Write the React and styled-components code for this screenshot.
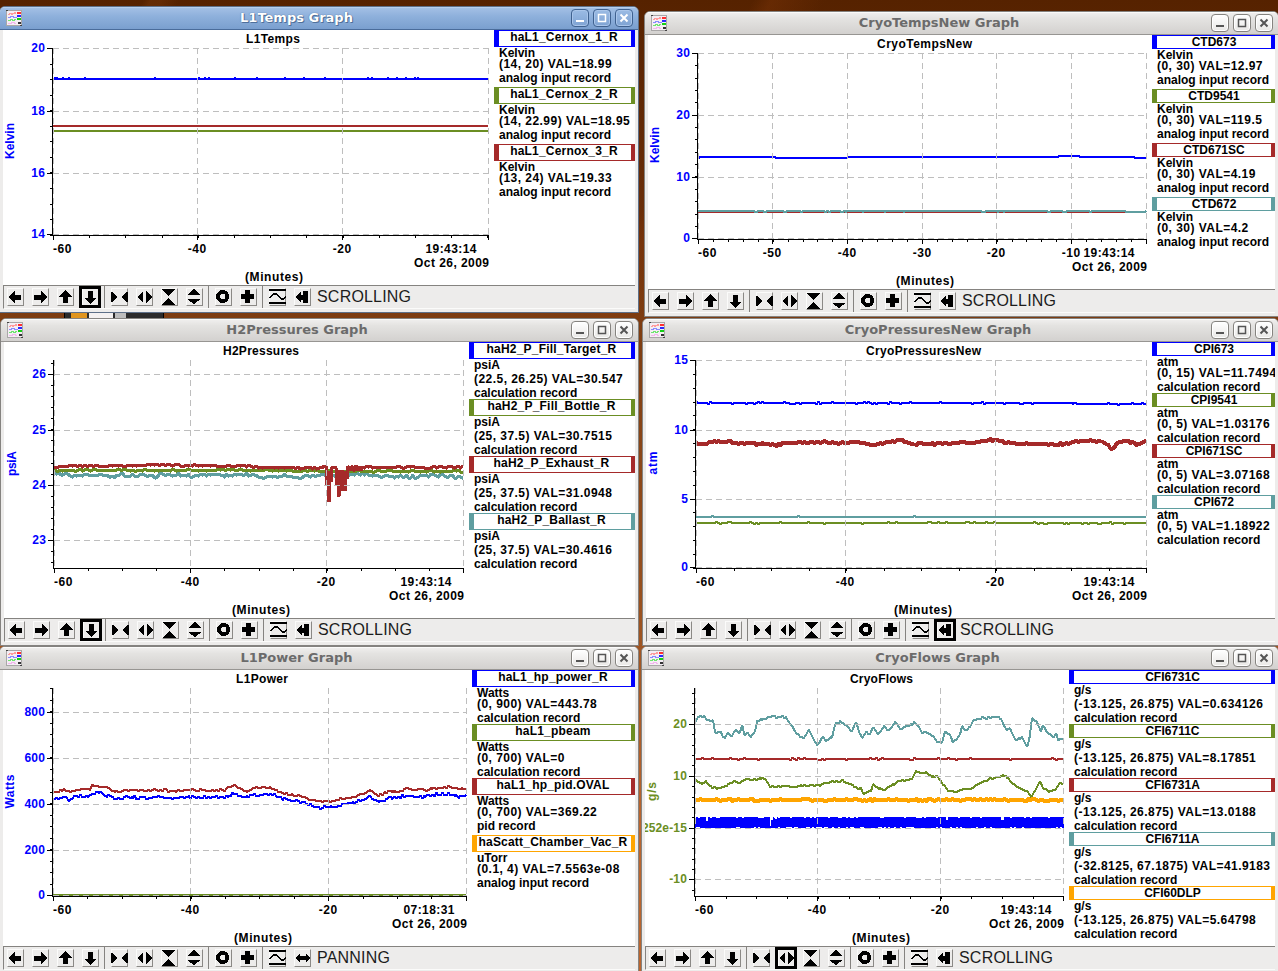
import React from "react";
import styled, { createGlobalStyle, css } from "styled-components";

const BLUE = "#0000ff";
const OLIVE = "#6b8e23";
const BROWN = "#a52a2a";
const CADET = "#5f9ea0";
const ORANGE = "#ffa500";

const GlobalStyle = createGlobalStyle`
  body {
    margin: 0;
    overflow: hidden;
    font-family: "Liberation Sans", Arial, sans-serif;
  }
`;

const Desktop = styled.div`
  position: relative;
  width: 1278px;
  height: 971px;
  overflow: hidden;
  background: linear-gradient(
      118deg,
      transparent 0 8%,
      rgba(140, 70, 20, 0.25) 8.4% 9%,
      transparent 10% 42%,
      rgba(140, 60, 10, 0.3) 43%,
      transparent 46%
    ),
    linear-gradient(#562200, #6d300a 25%, #7d3d12 33%, #96501f 60%, #b9652f 85%);
`;

const Frame = styled.section`
  position: absolute;
  left: ${({ x }) => x}px;
  top: ${({ y }) => y}px;
  width: ${({ w }) => w}px;
  height: ${({ h }) => h}px;
  box-sizing: border-box;
  display: flex;
  flex-direction: column;
  border: 1px solid ${({ active }) => (active ? "#5d6f88" : "#858380")};
  border-radius: 6px 6px 0 0;
  background: #edeceb;
  overflow: hidden;
`;

const TitleBar = styled.header`
  height: 22px;
  flex: none;
  display: flex;
  align-items: center;
  padding: 0 5px 0 6px;
  border-bottom: 1px solid #979592;
  background: linear-gradient(#f1f0ef, #e4e3e1 30%, #d3d1cf);
  box-shadow: inset 0 1px 0 #fbfbfa;
  color: #6b6b6b;
  ${({ active }) =>
    active &&
    css`
      background: linear-gradient(#a5c1e6, #8fb1dc 40%, #7a9fcf);
      border-color: #4a6c9b;
      box-shadow: inset 0 1px 0 #b7cfee;
      color: white;
      text-shadow: 0 0 1px #2c4a78, 1px 1px 0 #53749f;
    `}
`;

const Caption = styled.h1`
  flex: 1;
  margin: 0;
  text-align: center;
  font: bold 13px/20px "DejaVu Sans", sans-serif;
  white-space: nowrap;
`;

const Controls = styled.div`
  display: flex;
  gap: 4px;
`;

const Control = styled.button`
  width: 18px;
  height: 18px;
  padding: 0;
  display: flex;
  border: 1px solid ${({ active }) => (active ? "#3f618f" : "#85837f")};
  border-radius: 4px;
  background: ${({ active }) =>
    active
      ? "linear-gradient(#9bbbe4, #7fa3d3)"
      : "linear-gradient(#ffffff, #e9e8e6)"};
  box-shadow: inset 0 0 0 1px ${({ active }) => (active ? "#a9c5ea" : "#fff")};
  color: ${({ active }) => (active ? "#fff" : "#555")};
`;

const Body = styled.div`
  flex: 1;
  min-height: 0;
  display: flex;
  margin: 0 3px;
  background: white;
`;

const Legend = styled.div`
  flex: 1;
  min-width: 0;
  overflow: hidden;
  font-size: 12px;
  font-weight: bold;
  line-height: 12px;
  white-space: nowrap;
`;

const LegendItem = styled.div`
  margin-bottom: 1px;
`;

const Signal = styled.div`
  box-sizing: border-box;
  height: 14px;
  border: solid ${({ color }) => color};
  border-width: 1px 4px 1px 5px;
  text-align: center;
  ${({ tall }) =>
    tall &&
    css`
      height: 17px;
      padding-right: 2px;
      letter-spacing: 0.2px;
    `}
`;

// Lines are only as tall as their glyphs: descenders need three more pixels.
const Line = styled.div`
  height: ${({ tall }) => (tall ? 14 : 11)}px;
  padding-left: 5px;
  letter-spacing: ${({ wide }) => (wide ? 0.46 : 0)}px;
`;

const Toolbar = styled.footer`
  box-sizing: border-box;
  flex: none;
  height: 24px;
  margin: 0 3px 3px;
  display: flex;
  border-top: 1px solid #858380;
  border-left: 1px solid #858380;
  border-bottom: 1px solid #fbfbfa;
`;

const Group = styled.div`
  display: flex;
  gap: 8px;
  padding: 2px 5px 0 6px;
  border-left: 1px solid #858380;

  &:first-child {
    padding-left: 3px;
    border-left: none;
  }
`;

const Tool = styled.button`
  position: relative;
  box-sizing: border-box;
  width: 17px;
  height: 18px;
  padding: 0;
  border: 1px solid;
  border-color: #fbfbfa #8b8986 #8b8986 #fbfbfa;
  background: #edeceb;

  svg {
    position: absolute;
    left: -1px;
    top: -1px;
  }

  ${({ selected }) =>
    selected &&
    css`
      &::after {
        content: "";
        position: absolute;
        inset: -3px -3px -3px -4px;
        border: 3px solid black;
      }
    `}
`;

const Status = styled.div`
  padding-left: 1px;
  font-size: 16px;
  line-height: 21px;
  letter-spacing: 0.2px;
  color: #1c1c1c;
`;

const Taskbar = styled.div`
  position: absolute;
  left: 64px;
  top: 312px;
  width: 100px;
  height: 8px;
  display: flex;
  background: #2b2b2b;
  border: solid black;
  border-width: 0 1px;
  box-sizing: border-box;
  padding-left: 6px;
`;

const Chip = styled.div`
  width: ${({ w }) => w}px;
  background: ${({ color }) => color};
  margin-right: 2px;
`;

const ICONS = {
  left: <path d="M1 9 7.500 2.500V6.500H14v5H7.500V15.500z" />,
  right: <path d="M15 9 8.500 2.500V6.500H2v5h6.500V15.500z" />,
  up: <path d="M8.500 2 15 8.500h-4V15H6V8.500H2z" />,
  down: <path d="M8.500 16 15 9.500h-4V3H6v6.500H2z" />,
  squeezeX: <path d="M0 4h1l6 5-6 5H0zM17 4h-1l-6 5 6 5h1z" />,
  stretchX: <path d="M7 3v12L1 9zM10 3v12l6-6z" />,
  squeezeY: <path d="M1 1h13v1L7.500 8 1 2zM1 17h13v-1l-6.500-6L1 16z" />,
  stretchY: <path d="M1 7h14L8 1zM1 10.500h14L8 16.500z" />,
  ring: <circle cx="7.700" cy="8.500" r="4.600" fill="none" stroke="#000" strokeWidth="4" />,
  plus: <path d="M5 2h5v4h4v5h-4v4H5v-4H1V6h4z" />,
  wave: (
    <>
      <path d="M0 1h17v2H0zM0 14h17v2H0z" />
      <path d="M0.500 10.500 4.500 6h3l5 5h2l2.500-3" fill="none" stroke="#000" strokeWidth="1.500" />
    </>
  ),
  toBar: <path d="M1 9 7 3v3.500h2V3h5v12H9v-3.500H7V15z" />,
  pan: <path d="M1 9 5.500 4.500V7h6V4.500L16 9l-4.500 4.500V11h-6v2.500z" />,
};

const GROUPS = [
  ["left", "right", "up", "down"],
  ["squeezeX", "stretchX", "squeezeY", "stretchY"],
  ["ring", "plus"],
];

const AppIcon = () => (
  <svg width="16" height="16" viewBox="0 0 16 16" shapeRendering="crispEdges">
    <rect width="16" height="16" fill="#a9a7a7" />
    <rect x="1" y="1" width="14" height="14" fill="#f4eef4" />
    <g fill="none">
      <path d="M2 4.500h1v-1h2v1h1v-1h2v-1h1v1h1" stroke="#ff9c9c" />
      <path d="M2 7.500h2v-1h3v1h3v-1" stroke="#8a8aff" />
      <path d="M2 10.500h2v-1h2v1h2v-1h2" stroke="#6fe56f" />
      <path d="M2 13.500h3v-1h3v1h2" stroke="#f2b6ee" />
    </g>
    <path d="M11 2h4v2h-4z" fill="#ff3030" />
    <path d="M11 5h4v2h-4z" fill="#2a2aff" />
    <path d="M11 8h4v2h-4z" fill="#14d014" />
    <path d="M12 12h3v2h-3z" fill="#333" />
    <path d="M0 0h2v1H0zM14 15h2v1h-2z" fill="#444" />
  </svg>
);

const ControlIcon = ({ children }) => (
  <svg width="16" height="16" viewBox="0 0 16 16" fill="none" stroke="currentColor" strokeWidth="2">
    {children}
  </svg>
);

// Repeatable noise, so that a trace looks the same on every render.
const noise = (x, seed) => {
  const v = Math.sin(x * 12.9898 + seed * 78.233) * 43758.5453;
  return v - Math.floor(v);
};

const buildTrace = ({ points, jitter = 0, seed = 1, blips, blipBy = -1 }) => {
  const out = [];
  let k = 0;
  for (let x = points[0][0]; x <= points[points.length - 1][0]; x++) {
    while (k < points.length - 2 && x > points[k + 1][0]) k++;
    const [x0, y0] = points[k];
    const [x1, y1] = points[k + 1];
    const base = y0 + ((y1 - y0) * (x - x0)) / (x1 - x0);
    let y = Math.round(base + (noise(x >> 1, seed) - 0.5) * 2 * jitter);
    if (blips && blips.some(([a, b]) => x >= a && x <= b)) y += blipBy;
    out.push(`${x},${y}`);
  }
  return out.join(" ");
};

// A signal that swings between two levels faster than one pixel column.
const buildBand = ({ from, to, top, bottom, seed, notches }) => {
  let d = "";
  for (let x = from; x <= to; x++) {
    let y0 = top + (noise(x >> 1, seed) > 0.75 ? 1 : 0);
    const y1 = bottom - (noise(x >> 1, seed + 1) > 0.75 ? 1 : 0);
    notches.forEach(([a, b, depth]) => {
      if (x >= a && x <= b) y0 = top + depth;
    });
    d += `M${x + 0.5} ${y0}V${y1}`;
  }
  return d;
};

const range = (from, to, step) => {
  const out = [];
  for (let v = from; v <= to + 0.01; v += step) out.push(v);
  return out;
};

const Plot = ({ origin, size, plot }) => {
  const { title, unit, color, axis, xTicks, yTicks, xMinor, yMinor, time } = plot;
  const { left, right, top, bottom } = axis;
  return (
    <svg
      width={size[0]}
      height={size[1]}
      viewBox={`${origin[0]} ${origin[1]} ${size[0]} ${size[1]}`}
      fontSize="12"
      fontWeight="bold"
    >
      <g shapeRendering="crispEdges" fill="none" strokeLinejoin="bevel">
        {plot.band && <path d={buildBand(plot.band)} stroke={plot.band.color} />}
        {plot.traces.map((t, i) => (
          <polyline
            key={i}
            points={buildTrace(t)}
            stroke={t.color}
            strokeWidth={t.width || 2}
          />
        ))}
        <g stroke="#bebebe" strokeDasharray="6 4">
          {xTicks.map(([x]) => (
            <path key={x} d={`M${x + 0.5} ${top}V${bottom}`} />
          ))}
          {yTicks.map(([y]) => (
            <path key={y} d={`M${left + 1} ${y + 0.5}H${right + 1}`} />
          ))}
        </g>
        <g stroke="#000">
          <path d={`M${left + 0.5} ${top}V${bottom + 0.5}H${right + 1}`} />
          {xTicks.map(([x]) => (
            <path key={x} d={`M${x + 0.5} ${bottom}v5`} />
          ))}
          {yTicks.map(([y]) => (
            <path key={y} d={`M${left - 5} ${y + 0.5}h5`} />
          ))}
          {range(xTicks[0][0], right, xMinor).map(x => (
            <path key={x} d={`M${Math.round(x) + 0.5} ${bottom}v3`} />
          ))}
          {range(yMinor[0], bottom, yMinor[1]).map(y => (
            <path key={y} d={`M${left - 2} ${Math.round(y) + 0.5}h2`} />
          ))}
        </g>
      </g>
      <text x={title[1]} y={origin[1] + 13} textLength={title[2]}>
        {title[0]}
      </text>
      {yTicks.map(([y, label]) => (
        <text key={y} x={left - 7} y={y + 4} fill={color} textAnchor="end" letterSpacing="0.15">
          {label}
        </text>
      ))}
      {xTicks.map(([x, label], i) =>
        label ? (
          <text
            key={x}
            x={x}
            y={bottom + 18}
            textAnchor={i === 0 ? "start" : "middle"}
            textLength="18.500"
          >
            {label}
          </text>
        ) : null
      )}
      <text x={right - 62.5} y={bottom + 18} textLength="51">
        {time}
      </text>
      <text x={right - 74} y={bottom + 32} textLength="75">
        Oct 26, 2009
      </text>
      <text x={plot.minutesX} y={bottom + 46} textLength="58">
        (Minutes)
      </text>
      <text
        transform={`translate(${unit[1]} ${unit[2]}) rotate(-90)`}
        textLength={unit[3]}
        fill={color}
      >
        {unit[0]}
      </text>
    </svg>
  );
};

const hasDescender = text => /[gjpqy_,()]/.test(text);

const GraphWindow = ({ name, x, y, right, bottom, active, legendX, legend, selected, panning, plot }) => {
  const groups = [...GROUPS, ["wave", panning ? "pan" : "toBar"]];
  return (
    <Frame x={x} y={y} w={right - x} h={bottom - y} active={active}>
      <TitleBar active={active}>
        <AppIcon />
        <Caption>{name} Graph</Caption>
        <Controls>
          <Control active={active} aria-label="Minimize">
            <ControlIcon>
              <path d="M4 11h8" />
            </ControlIcon>
          </Control>
          <Control active={active} aria-label="Maximize">
            <ControlIcon>
              <path d="M4.500 4.500h7v7h-7z" strokeWidth="1.500" />
            </ControlIcon>
          </Control>
          <Control active={active} aria-label="Close">
            <ControlIcon>
              <path d="M4.500 4.500l7 7M11.500 4.500l-7 7" />
            </ControlIcon>
          </Control>
        </Controls>
      </TitleBar>
      <Body>
        <Plot
          origin={[x + 4, y + 24]}
          size={[legendX - x - 4, bottom - 28 - y - 24]}
          plot={plot}
        />
        <Legend>
          {legend.map(([color, signal, ...lines]) => (
            <LegendItem key={signal}>
              <Signal color={color} tall={hasDescender(signal)}>
                {signal}
              </Signal>
              {lines.map(line => (
                <Line key={line} tall={hasDescender(line)} wide={line[0] === "("}>
                  {line}
                </Line>
              ))}
            </LegendItem>
          ))}
        </Legend>
      </Body>
      <Toolbar>
        {groups.map((group, i) => (
          <Group key={i}>
            {group.map(icon => (
              <Tool key={icon} selected={icon === selected} aria-label={icon}>
                <svg width="17" height="18" viewBox="0 0 17 18" shapeRendering="crispEdges">
                  {ICONS[icon]}
                </svg>
              </Tool>
            ))}
          </Group>
        ))}
        <Status>{panning ? "PANNING" : "SCROLLING"}</Status>
      </Toolbar>
    </Frame>
  );
};

const flat = (from, to, y) => [[from, y], [to, y]];
const at = (...xs) => xs.map(v => [v, v]);

const AI = "analog input record";
const CALC = "calculation record";

const WINDOWS = [
  {
    name: "L1Temps",
    x: -1,
    y: 6,
    right: 639,
    bottom: 313,
    active: true,
    legendX: 494,
    selected: "down",
    legend: [
      [BLUE, "haL1_Cernox_1_R", "Kelvin", "(14, 20) VAL=18.99", AI],
      [OLIVE, "haL1_Cernox_2_R", "Kelvin", "(14, 22.99) VAL=18.95", AI],
      [BROWN, "haL1_Cernox_3_R", "Kelvin", "(13, 24) VAL=19.33", AI],
    ],
    plot: {
      title: ["L1Temps", 246, 54],
      unit: ["Kelvin", 14, 159, 36],
      color: BLUE,
      axis: { left: 52, right: 488, top: 48, bottom: 235 },
      xTicks: [[53, "-60"], [197, "-40"], [342, "-20"], [488]],
      xMinor: 36.2,
      yTicks: [[48, "20"], [111, "18"], [173, "16"], [234, "14"]],
      yMinor: [48, 15.55],
      time: "19:43:14",
      minutesX: 245,
      traces: [
        {
          color: BLUE,
          points: flat(53, 488, 79),
          blips: at(55, 57, 63, 69, 85, 155, 199, 205, 209, 235, 257, 285, 304, 325, 368, 372, 388, 397, 406, 415, 418),
        },
        { color: OLIVE, points: flat(53, 488, 131) },
        { color: BROWN, points: flat(53, 488, 126) },
      ],
    },
  },
  {
    name: "CryoTempsNew",
    x: 644,
    y: 11,
    right: 1279,
    bottom: 317,
    legendX: 1152,
    legend: [
      [BLUE, "CTD673", "Kelvin", "(0, 30) VAL=12.97", AI],
      [OLIVE, "CTD9541", "Kelvin", "(0, 30) VAL=119.5", AI],
      [BROWN, "CTD671SC", "Kelvin", "(0, 30) VAL=4.19", AI],
      [CADET, "CTD672", "Kelvin", "(0, 30) VAL=4.2", AI],
    ],
    plot: {
      title: ["CryoTempsNew", 877, 95],
      unit: ["Kelvin", 659, 163, 36],
      color: BLUE,
      axis: { left: 697, right: 1146, top: 53, bottom: 239 },
      xTicks: [[698, "-60"], [772, "-50"], [847, "-40"], [922, "-30"], [996, "-20"], [1071, "-10"], [1146]],
      xMinor: 14.93,
      yTicks: [[53, "30"], [115, "20"], [177, "10"], [238, "0"]],
      yMinor: [53, 12.35],
      time: "19:43:14",
      minutesX: 896,
      traces: [
        {
          color: BLUE,
          points: [[698, 158], [700, 157], [772, 157], [779, 158], [845, 158], [850, 157], [1057, 157], [1060, 156], [1078, 156], [1081, 157], [1134, 157], [1136, 158], [1146, 158]],
        },
        { color: BROWN, points: flat(698, 1146, 212) },
        {
          color: CADET,
          points: flat(698, 1146, 211),
          blips: [[755, 757], [764, 766], [784, 786], [801, 802], [825, 826], [829, 830], [841, 843], [846, 846], [863, 863], [885, 885], [904, 904], [982, 985], [998, 998], [1004, 1004], [1048, 1050], [1063, 1066], [1090, 1091], [1126, 1145]],
          blipBy: 1,
        },
      ],
    },
  },
  {
    name: "H2Pressures",
    x: 0,
    y: 318,
    right: 639,
    bottom: 646,
    legendX: 469,
    selected: "down",
    legend: [
      [BLUE, "haH2_P_Fill_Target_R", "psiA", "(22.5, 26.25) VAL=30.547", CALC],
      [OLIVE, "haH2_P_Fill_Bottle_R", "psiA", "(25, 37.5) VAL=30.7515", CALC],
      [BROWN, "haH2_P_Exhaust_R", "psiA", "(25, 37.5) VAL=31.0948", CALC],
      [CADET, "haH2_P_Ballast_R", "psiA", "(25, 37.5) VAL=30.4616", CALC],
    ],
    plot: {
      title: ["H2Pressures", 223, 76],
      unit: ["psiA", 15.5, 476, 25],
      color: BLUE,
      axis: { left: 53, right: 463, top: 360, bottom: 568 },
      xTicks: [[54, "-60"], [190, "-40"], [326, "-20"], [463]],
      xMinor: 34.1,
      yTicks: [[374, "26"], [430, "25"], [485, "24"], [540, "23"]],
      yMinor: [363, 11.06],
      time: "19:43:14",
      minutesX: 232,
      traces: [
        {
          color: CADET,
          width: 3,
          jitter: 1.5,
          seed: 3,
          points: [[54, 473], [63, 474], [75, 476], [95, 475], [108, 475], [114, 478], [118, 474], [135, 475], [152, 475], [156, 478], [160, 474], [185, 475], [195, 476], [215, 474], [225, 476], [235, 475], [255, 474], [260, 477], [285, 475], [300, 477], [320, 475], [345, 476], [352, 474], [385, 476], [412, 477], [440, 475], [463, 477]],
        },
        { color: OLIVE, width: 3, jitter: 0.7, seed: 5, points: [[54, 470], [260, 470], [340, 471], [463, 471]] },
        {
          color: BROWN,
          width: 3,
          jitter: 0.9,
          seed: 8,
          points: [[54, 466], [170, 465], [250, 466], [262, 467], [320, 468], [326, 466], [327, 486], [328, 470], [329, 501], [330, 471], [331, 482], [332, 466], [336, 467], [337, 484], [338, 470], [339, 497], [340, 472], [341, 490], [342, 470], [343, 484], [344, 470], [345, 490], [346, 470], [347, 478], [348, 467], [350, 471], [352, 466], [354, 471], [356, 466], [358, 471], [360, 466], [361, 470], [362, 467], [463, 467]],
        },
      ],
    },
  },
  {
    name: "CryoPressuresNew",
    x: 642,
    y: 318,
    right: 1279,
    bottom: 646,
    legendX: 1152,
    selected: "toBar",
    legend: [
      [BLUE, "CPI673", "atm", "(0, 15) VAL=11.7494", CALC],
      [OLIVE, "CPI9541", "atm", "(0, 5) VAL=1.03176", CALC],
      [BROWN, "CPI671SC", "atm", "(0, 5) VAL=3.07168", CALC],
      [CADET, "CPI672", "atm", "(0, 5) VAL=1.18922", CALC],
    ],
    plot: {
      title: ["CryoPressuresNew", 866, 115],
      unit: ["atm", 657, 474.5, 23],
      color: BLUE,
      axis: { left: 695, right: 1146, top: 360, bottom: 568 },
      xTicks: [[696, "-60"], [845, "-40"], [995, "-20"], [1146]],
      xMinor: 37.5,
      yTicks: [[360, "15"], [430, "10"], [499, "5"], [567, "0"]],
      yMinor: [360, 13.85],
      time: "19:43:14",
      minutesX: 894,
      traces: [
        { color: BLUE, jitter: 0.6, seed: 2, points: [[696, 403], [785, 403], [792, 404], [805, 403], [1060, 403], [1090, 404], [1146, 404]] },
        { color: CADET, jitter: 0.52, seed: 4, points: flat(696, 1146, 517) },
        { color: OLIVE, jitter: 0.6, seed: 7, points: flat(696, 1146, 523) },
        {
          color: BROWN,
          width: 4,
          jitter: 1,
          seed: 6,
          points: [[696, 444], [706, 444], [715, 441], [722, 441], [735, 443], [750, 443], [760, 444], [775, 445], [790, 443], [812, 442], [840, 443], [858, 442], [872, 445], [885, 443], [895, 441], [901, 440], [908, 442], [914, 445], [920, 443], [932, 444], [958, 443], [976, 442], [993, 440], [1010, 443], [1035, 444], [1055, 445], [1075, 442], [1085, 441], [1100, 441], [1106, 443], [1112, 450], [1118, 443], [1125, 440], [1135, 444], [1138, 445], [1146, 441]],
        },
      ],
    },
  },
  {
    name: "L1Power",
    x: -1,
    y: 646,
    right: 639,
    bottom: 974,
    legendX: 472,
    panning: true,
    legend: [
      [BLUE, "haL1_hp_power_R", "Watts", "(0, 900) VAL=443.78", CALC],
      [OLIVE, "haL1_pbeam", "Watts", "(0, 700) VAL=0", CALC],
      [BROWN, "haL1_hp_pid.OVAL", "Watts", "(0, 700) VAL=369.22", "pid record"],
      [ORANGE, "haScatt_Chamber_Vac_R", "uTorr", "(0.1, 4) VAL=7.5563e-08", AI],
    ],
    plot: {
      title: ["L1Power", 236, 52],
      unit: ["Watts", 14, 808.5, 34],
      color: BLUE,
      axis: { left: 52, right: 466, top: 688, bottom: 896 },
      xTicks: [[53, "-60"], [190, "-40"], [328, "-20"], [466]],
      xMinor: 34.4,
      yTicks: [[712, "800"], [758, "600"], [804, "400"], [850, "200"], [895, "0"]],
      yMinor: [688, 11.5],
      time: "07:18:31",
      minutesX: 234,
      traces: [
        { color: OLIVE, points: flat(53, 466, 895) },
        {
          color: BROWN,
          jitter: 0.9,
          seed: 2,
          points: [[53, 793], [60, 791], [64, 790], [68, 792], [75, 790], [90, 789], [92, 785], [98, 786], [108, 788], [116, 792], [125, 790], [150, 790], [165, 790], [169, 791], [190, 790], [225, 790], [229, 787], [235, 786], [242, 789], [247, 792], [253, 788], [270, 788], [277, 791], [285, 794], [300, 796], [308, 799], [320, 801], [335, 801], [340, 799], [355, 797], [370, 790], [378, 796], [388, 792], [400, 791], [407, 789], [425, 790], [440, 788], [450, 787], [459, 788], [463, 789], [466, 788]],
        },
        {
          color: BLUE,
          jitter: 1.2,
          seed: 9,
          points: [[53, 799], [62, 798], [65, 796], [69, 800], [75, 796], [88, 796], [92, 793], [98, 792], [108, 796], [118, 799], [128, 797], [145, 798], [160, 797], [169, 798], [190, 797], [225, 797], [232, 794], [243, 797], [255, 795], [275, 795], [283, 799], [300, 802], [308, 804], [313, 806], [320, 808], [335, 806], [350, 804], [362, 800], [369, 797], [379, 802], [390, 798], [407, 796], [425, 797], [437, 794], [450, 794], [460, 797], [466, 795]],
        },
      ],
    },
  },
  {
    name: "CryoFlows",
    x: 641,
    y: 646,
    right: 1279,
    bottom: 974,
    legendX: 1069,
    selected: "stretchX",
    legend: [
      [BLUE, "CFI6731C", "g/s", "(-13.125, 26.875) VAL=0.634126", CALC],
      [OLIVE, "CFI6711C", "g/s", "(-13.125, 26.875) VAL=8.17851", CALC],
      [BROWN, "CFI6731A", "g/s", "(-13.125, 26.875) VAL=13.0188", CALC],
      [CADET, "CFI6711A", "g/s", "(-32.8125, 67.1875) VAL=41.9183", CALC],
      [ORANGE, "CFI60DLP", "g/s", "(-13.125, 26.875) VAL=5.64798", CALC],
    ],
    plot: {
      title: ["CryoFlows", 850, 63],
      unit: ["g/s", 655.5, 801, 19],
      color: OLIVE,
      axis: { left: 694, right: 1063, top: 688, bottom: 896 },
      xTicks: [[695, "-60"], [817, "-40"], [940, "-20"], [1063]],
      xMinor: 30.7,
      yTicks: [[724, "20"], [776, "10"], [828, "2252e-15"], [879, "-10"]],
      yMinor: [693, 10.35],
      time: "19:43:14",
      minutesX: 852,
      band: {
        color: BLUE,
        from: 695,
        to: 1063,
        top: 817,
        bottom: 828,
        seed: 3,
        notches: [[706, 707, 4], [770, 770, 9], [771, 772, 3], [775, 776, 2], [946, 947, 3], [1001, 1003, 3]],
      },
      traces: [
        { color: BROWN, jitter: 0.6, seed: 4, points: flat(695, 1063, 759) },
        {
          color: CADET,
          jitter: 0.9,
          seed: 5,
          points: [[695, 722], [698, 717], [704, 717], [708, 721], [713, 720], [715, 733], [721, 733], [725, 739], [728, 732], [731, 737], [736, 730], [739, 734], [742, 726], [745, 735], [748, 733], [751, 737], [755, 732], [757, 721], [763, 719], [768, 717], [785, 717], [789, 722], [792, 726], [798, 735], [804, 738], [809, 730], [813, 738], [817, 744], [820, 742], [823, 735], [826, 741], [832, 737], [835, 724], [840, 722], [846, 725], [852, 732], [856, 721], [859, 732], [862, 737], [866, 733], [870, 733], [874, 727], [878, 735], [884, 726], [887, 730], [890, 730], [895, 722], [900, 729], [910, 726], [914, 722], [918, 725], [922, 732], [926, 732], [930, 735], [934, 737], [938, 743], [942, 742], [945, 732], [950, 735], [953, 743], [957, 739], [959, 737], [962, 727], [967, 731], [973, 721], [980, 718], [1001, 718], [1004, 726], [1007, 730], [1010, 728], [1016, 741], [1022, 737], [1027, 747], [1030, 735], [1032, 718], [1038, 724], [1041, 732], [1043, 726], [1048, 733], [1053, 738], [1056, 733], [1058, 739], [1063, 738]],
        },
        {
          color: OLIVE,
          jitter: 0.7,
          seed: 6,
          points: [[695, 780], [702, 784], [706, 781], [710, 787], [718, 788], [728, 785], [735, 781], [740, 783], [745, 779], [755, 780], [760, 778], [765, 779], [770, 787], [780, 786], [795, 787], [805, 785], [820, 785], [830, 782], [843, 781], [850, 784], [858, 789], [861, 788], [864, 795], [867, 792], [871, 791], [873, 784], [878, 788], [885, 790], [892, 785], [900, 781], [912, 779], [916, 771], [920, 773], [926, 772], [932, 777], [937, 776], [941, 782], [948, 790], [957, 792], [962, 790], [972, 788], [980, 783], [990, 779], [1000, 777], [1005, 775], [1012, 783], [1020, 788], [1028, 792], [1031, 797], [1035, 791], [1040, 781], [1043, 788], [1050, 792], [1055, 790], [1059, 784], [1063, 783]],
        },
        { color: ORANGE, width: 4, jitter: 0.8, seed: 7, points: flat(695, 1063, 800) },
      ],
    },
  },
];

const App = () => (
  <>
    <GlobalStyle />
    <Desktop>
      <Taskbar>
        <Chip w={16} color="#e0951f" />
        <Chip w={24} color="#f3f0f0" />
        <Chip w={11} color="#bdbdbd" />
      </Taskbar>
      {WINDOWS.map(win => (
        <GraphWindow key={win.name} {...win} />
      ))}
    </Desktop>
  </>
);

export default App;
